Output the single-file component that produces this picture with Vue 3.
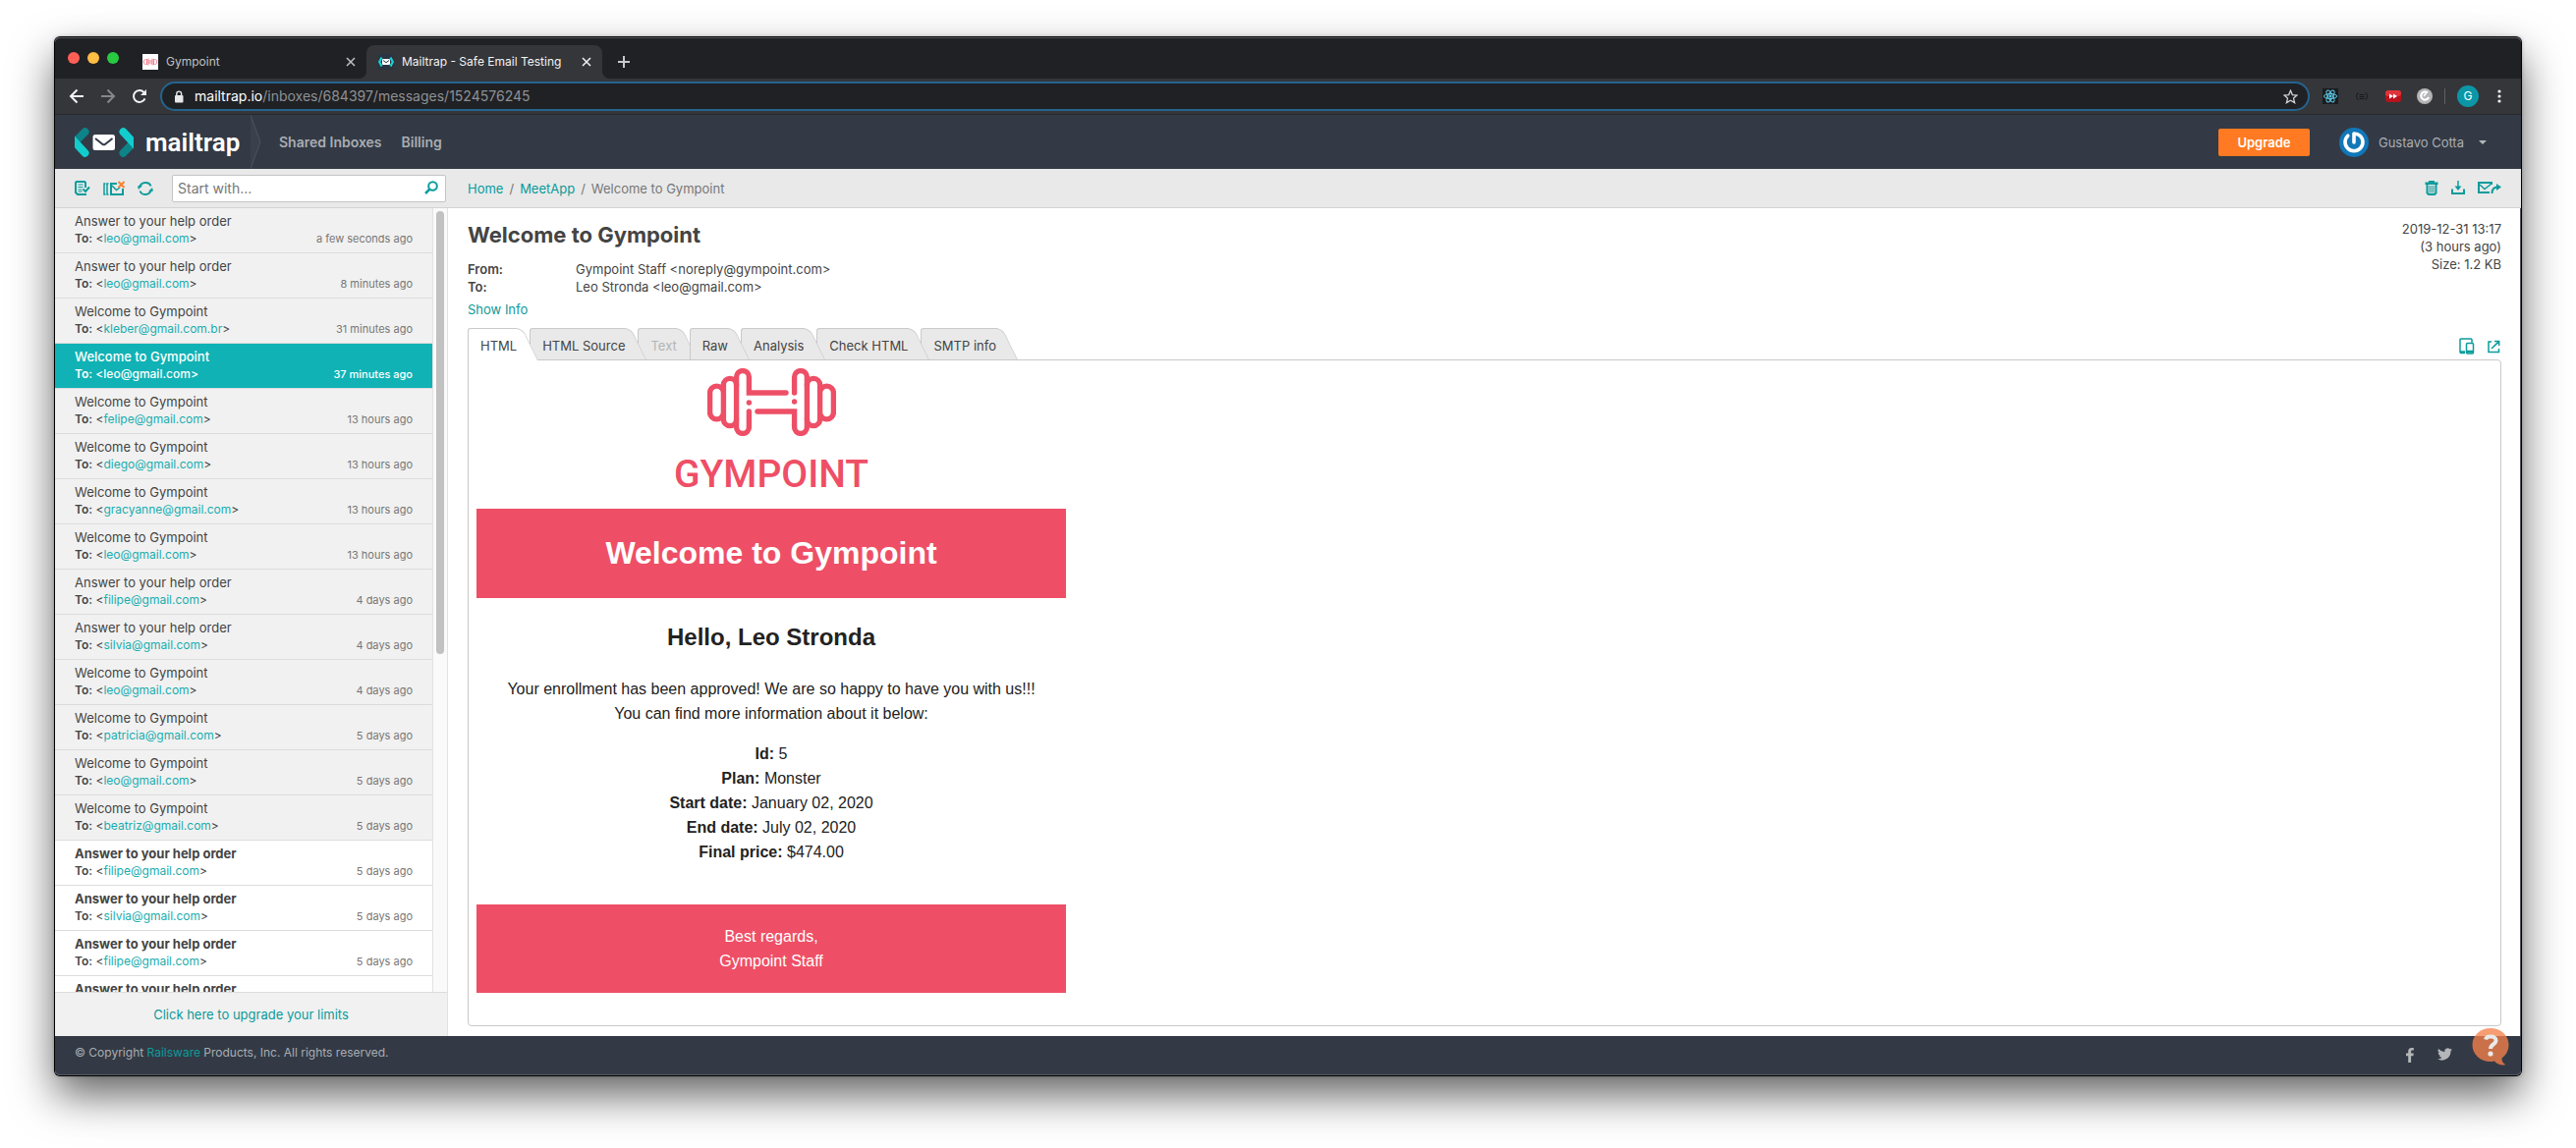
<script setup>
import { ref } from 'vue'

const query = ref('')
const path = ref('/inboxes/684397/messages/1524576245')
const HELP = 'Answer to your help order'
const WELCOME = 'Welcome to Gympoint'

const messages = [
  { title: HELP, to: 'leo@gmail.com', time: 'a few seconds ago' },
  { title: HELP, to: 'leo@gmail.com', time: '8 minutes ago' },
  { title: WELCOME, to: 'kleber@gmail.com.br', time: '31 minutes ago' },
  { title: WELCOME, to: 'leo@gmail.com', time: '37 minutes ago', selected: true },
  { title: WELCOME, to: 'felipe@gmail.com', time: '13 hours ago' },
  { title: WELCOME, to: 'diego@gmail.com', time: '13 hours ago' },
  { title: WELCOME, to: 'gracyanne@gmail.com', time: '13 hours ago' },
  { title: WELCOME, to: 'leo@gmail.com', time: '13 hours ago' },
  { title: HELP, to: 'filipe@gmail.com', time: '4 days ago' },
  { title: HELP, to: 'silvia@gmail.com', time: '4 days ago' },
  { title: WELCOME, to: 'leo@gmail.com', time: '4 days ago' },
  { title: WELCOME, to: 'patricia@gmail.com', time: '5 days ago' },
  { title: WELCOME, to: 'leo@gmail.com', time: '5 days ago' },
  { title: WELCOME, to: 'beatriz@gmail.com', time: '5 days ago' },
  { title: HELP, to: 'filipe@gmail.com', time: '5 days ago', unread: true },
  { title: HELP, to: 'silvia@gmail.com', time: '5 days ago', unread: true },
  { title: HELP, to: 'filipe@gmail.com', time: '5 days ago', unread: true },
  { title: HELP, to: 'silvia@gmail.com', time: '5 days ago', unread: true },
]

const views = ['HTML', 'HTML Source', 'Text', 'Raw', 'Analysis', 'Check HTML', 'SMTP info']

const details = [
  ['Id:', '5'],
  ['Plan:', 'Monster'],
  ['Start date:', 'January 02, 2020'],
  ['End date:', 'July 02, 2020'],
  ['Final price:', '$474.00'],
]
</script>

<template>
  <div class="desktop">
    <div class="window">
      <div class="tabstrip">
        <div class="lights"><i class="red"></i><i class="yellow"></i><i class="green"></i></div>
        <div class="btab">
          <svg width="16" height="16" viewBox="0 0 16 16">
            <path fill="#fff" d="M0 0h16v16H0z" />
            <g fill="none" stroke="#f0788a"><path d="M6 7h4M6 9h4M4.500 5v6M6 4.500v7M11.500 5v6M10 4.500v7" /><path d="M3.500 5.500c-3 0-3 5 0 5M12.500 5.500c3 0 3 5 0 5" /></g>
          </svg>
          <span>Gympoint</span>
          <button class="plain" aria-label="Close tab"><svg width="10" height="10" viewBox="0 0 10 10"><path d="M1 1l8 8M9 1l-8 8" stroke="currentColor" stroke-width="1.500" /></svg></button>
        </div>
        <div class="btab current">
          <svg width="16" height="16" viewBox="0 0 16 16">
            <path fill="#2b3440" d="M0 0h16v16H0z" />
            <path d="M3.500 3.500L1.200 8l2.300 4.500M12.500 3.500L14.800 8l-2.300 4.500" fill="none" stroke="#14d5d8" stroke-width="2.200" />
            <rect x="4" y="5" width="8" height="6" rx="1" fill="#fff" /><path d="M5 6.500l3 2.200 3-2.200" fill="none" stroke="#2b3440" />
          </svg>
          <span>Mailtrap - Safe Email Testing</span>
          <button class="plain" aria-label="Close tab"><svg width="10" height="10" viewBox="0 0 10 10"><path d="M1 1l8 8M9 1l-8 8" stroke="currentColor" stroke-width="1.500" /></svg></button>
        </div>
        <button class="plain newtab" aria-label="New tab"><svg width="12" height="12" viewBox="0 0 12 12"><path d="M6 0v12M0 6h12" stroke="currentColor" stroke-width="2" /></svg></button>
      </div>

      <div class="browserbar">
        <button class="plain" aria-label="Back"><svg width="16" height="16" viewBox="0 0 16 16" fill="none" stroke="#f1f1f2" stroke-width="2"><path d="M15 8H2M8.500 1.500L2 8l6.500 6.500" /></svg></button>
        <button class="plain" aria-label="Forward"><svg width="16" height="16" viewBox="0 0 16 16" fill="none" stroke="#86878a" stroke-width="2"><path d="M1 8h13M7.500 1.500L14 8l-6.500 6.500" /></svg></button>
        <button class="plain" aria-label="Reload"><svg width="16" height="16" viewBox="0 0 16 16"><path d="M13.500 10.300A6 6 0 1 1 12.500 4" fill="none" stroke="#f1f1f2" stroke-width="2" /><path d="M15 1v6H9z" fill="#f1f1f2" /></svg></button>
        <label class="address">
          <svg width="10" height="13" viewBox="0 0 10 13"><rect x="1" y="5" width="8.500" height="7.500" rx="1" fill="#e8e8ea" /><path d="M2.800 5.500V3.500a2.400 2.400 0 0 1 4.800 0v2" fill="none" stroke="#e8e8ea" stroke-width="1.400" /></svg>
          <span class="host">mailtrap.io</span>
          <input v-model="path" type="text" aria-label="Address" />
          <svg width="15" height="15" viewBox="0 0 16 16"><path d="M8 1.300l2 4.700 5 .400-3.800 3.300 1.200 4.900L8 12l-4.400 2.600 1.200-4.900L1 6.400 6 6z" fill="none" stroke="#d0d1d4" stroke-width="1.400" /></svg>
        </label>
        <div class="extensions">
          <svg width="16" height="16" viewBox="0 0 16 16"><path fill="#1b1c1f" d="M0 0h16v16H0z" /><g fill="none" stroke="#5ccbe8"><ellipse cx="8" cy="8" rx="6.600" ry="2.500" /><ellipse cx="8" cy="8" rx="6.600" ry="2.500" transform="rotate(60 8 8)" /><ellipse cx="8" cy="8" rx="6.600" ry="2.500" transform="rotate(120 8 8)" /></g><circle cx="8" cy="8" r="1.400" fill="#5ccbe8" /></svg>
          <svg width="16" height="16" viewBox="0 0 16 16" fill="none" stroke="#17181a"><path d="M4.500 4.500c-2 0-1 3-2.500 3.500 1.500.500.500 3.500 2.500 3.500M11.500 4.500c2 0 1 3 2.500 3.500-1.500.500-.500 3.500-2.500 3.500M5.500 6.500h5M5.500 8.500h5M5.500 10.500h5" /></svg>
          <svg width="16" height="16" viewBox="0 0 16 16"><rect y="2" width="16" height="12" rx="3" fill="#b8121c" /><rect y="2" width="16" height="6" rx="3" fill="#e0343c" /><path fill="#fff" d="M4 5.500L8 8l-4 2.500zM8 5.500L12 8l-4 2.500z" /></svg>
          <svg width="16" height="16" viewBox="0 0 16 16"><circle cx="8" cy="8" r="8" fill="#b4b4b6" /><path d="M10.500 4.200A4 4 0 1 0 12 9" fill="none" stroke="#fff" stroke-width="2.200" /><path d="M7 8l4-5" stroke="#fff" stroke-width="1.500" /></svg>
          <i class="divider"></i>
          <span class="profile">G</span>
          <svg class="dots" width="4" height="16" viewBox="0 0 4 16" fill="#f1f1f2"><circle cx="2" cy="3" r="1.600" /><circle cx="2" cy="8" r="1.600" /><circle cx="2" cy="13" r="1.600" /></svg>
        </div>
      </div>

      <header class="nav">
        <a class="brand" href="#">
          <svg width="60" height="30" viewBox="0 0 60 30">
            <g fill="none" stroke-width="8" stroke-linecap="round">
              <path d="M0 15L10.500 4.200M49.500 25.800L60 15" stroke="#0c8488" />
              <path d="M-4 10L10.500 25.800M49.500 4.200L64 20" stroke="#11cdce" />
            </g>
            <rect x="18.500" y="7" width="22.500" height="16" rx="2.500" fill="#fff" />
            <path d="M21 11l7.200 5.700c1 .800 2 .800 3 0L38.500 11" fill="none" stroke="#333a45" stroke-width="2" />
          </svg>
          <span>mailtrap</span>
        </a>
        <svg class="notch" width="11" height="55" viewBox="0 0 11 55"><path d="M0 0l10 27.500L0 55" fill="#39414c" stroke="#4b535e" /></svg>
        <nav><a href="#">Shared Inboxes</a><a href="#">Billing</a></nav>
        <button class="upgrade">Upgrade</button>
        <button class="account">
          <svg width="30" height="30" viewBox="0 0 30 30"><circle cx="15" cy="15" r="15" fill="#1177b8" /><path d="M8.800 8.200a9 9 0 1 0 12.400 0C19.500 6.600 17.800 6 15 6v9" fill="none" stroke="#fff" stroke-width="3.600" stroke-linecap="round" stroke-linejoin="round" /></svg>
          <span>Gustavo Cotta</span>
          <svg width="8" height="4" viewBox="0 0 8 4"><path fill="#b5b8bc" d="M0 0h8L4 4z" /></svg>
        </button>
      </header>

      <div class="actions">
        <div class="inboxtools">
          <button class="plain" aria-label="Mark all as read"><svg width="16" height="16" viewBox="0 0 16 16" fill="none" stroke="#0c9c9c" stroke-width="2"><path d="M11 13v1H3L1 12V2l1-1h8l1 1v5" /><path d="M3.500 4h5M3.500 6.500h5M3.500 9h4M3.500 11h4" stroke-width="1" /><path d="M8.500 8.500L11 11l4-4.500" /></svg></button>
          <button class="plain" aria-label="Empty inbox"><svg width="22" height="16" viewBox="0 0 22 16" fill="none" stroke="#0c9c9c"><path d="M2.500 3H1v11h1.500M5.500 3H4v11h1.500" stroke-width="1.500" /><path d="M14 3H8v11h12V8" stroke-width="2" /><path d="M9 5l4.500 4.500L17 7" stroke-width="1.500" /><path d="M15.500 1l6 6M21.500 1l-6 6" stroke="#f58233" stroke-width="2" /></svg></button>
          <button class="plain" aria-label="Refresh"><svg width="16" height="16" viewBox="0 0 16 16"><path d="M2 6.500C4 1 11.500.500 13.500 5.500M14 9.500C12 15 4.500 15.500 2.500 10.500" fill="none" stroke="#0c9c9c" stroke-width="2" /><path d="M0 5.500L5 5 1 9zM16 10.500L11 11l4-4z" fill="#0c9c9c" /></svg></button>
          <label class="search">
            <input v-model="query" type="text" placeholder="Start with..." aria-label="Search messages" />
            <svg width="14" height="14" viewBox="0 0 14 14" fill="none" stroke="#0c9c9c" stroke-width="2"><circle cx="8.500" cy="5.500" r="4.300" /><path d="M5.500 8.500L1 13" stroke-width="2.500" /></svg>
          </label>
        </div>
        <div class="crumbs">
          <a href="#">Home</a><span>/</span><a href="#">MeetApp</a><span>/</span><span>Welcome to Gympoint</span>
        </div>
        <div class="messagetools">
          <button class="plain" aria-label="Delete"><svg width="14" height="15" viewBox="0 0 14 15"><path fill="#0c9c9c" d="M4 0h6v1.500h3.500V4h-13V1.500H4z" /><path d="M2.500 4v8.500L4 14h6l1.500-1.500V4" fill="none" stroke="#0c9c9c" stroke-width="2" /><path d="M5 5v7.500M7 5v7.500M9 5v7.500" stroke="#0c9c9c" /></svg></button>
          <button class="plain" aria-label="Download"><svg width="14" height="15" viewBox="0 0 14 15" fill="none" stroke="#0c9c9c" stroke-width="2"><path d="M1 8.500V13h12V8.500" /><path d="M7 0v6" stroke-width="1.500" /><path d="M3.500 5.500h7L7 10z" fill="#0c9c9c" stroke="none" /></svg></button>
          <button class="plain" aria-label="Forward message"><svg width="24" height="15" viewBox="0 0 24 15" fill="none" stroke="#0c9c9c" stroke-width="2"><path d="M12 12H1V2h13v2" /><path d="M2 4l5 4.500L14 3" stroke-width="1.500" /><path d="M14.500 13c0-5 2-6.500 6-6.500" /><path d="M19 3l5 3.500-5 3.500z" fill="#0c9c9c" stroke="none" /></svg></button>
        </div>
      </div>

      <div class="body">
        <aside class="sidebar">
          <div class="listwrap">
            <ul class="list">
              <li v-for="(m, i) in messages" :key="i" :class="{ selected: m.selected, unread: m.unread }">
                <div class="subject">{{ m.title }}</div>
                <div class="meta">
                  <span><b>To:</b> &lt;<a href="#">{{ m.to }}</a>&gt;</span>
                  <time>{{ m.time }}</time>
                </div>
              </li>
            </ul>
            <div class="scroll"><div class="thumb"></div></div>
          </div>
          <a class="limits" href="#">Click here to upgrade your limits</a>
        </aside>

        <main class="message">
          <div class="head">
            <div>
              <h1>Welcome to Gympoint</h1>
              <dl>
                <dt>From:</dt><dd>Gympoint Staff &lt;noreply@gympoint.com&gt;</dd>
                <dt>To:</dt><dd>Leo Stronda &lt;leo@gmail.com&gt;</dd>
              </dl>
              <a href="#">Show Info</a>
            </div>
            <div class="stamp">2019-12-31 13:17<br />(3 hours ago)<br />Size: 1.2 KB</div>
          </div>

          <div class="viewbar">
            <button
              v-for="(v, i) in views"
              :key="v"
              class="view"
              :class="{ active: i === 0 }"
              :disabled="v === 'Text'"
              :style="{ zIndex: v === 'Text' ? 1 : 10 - i }"
            >{{ v }}</button>
            <div class="viewtools">
              <button class="plain" aria-label="Device preview"><svg width="16" height="17" viewBox="0 0 16 17" fill="none" stroke="#0c9c9c" stroke-width="1.500"><path d="M6 15.500H1.800L1 14.700V1.800L1.800 1h10.400l.8.800V5" /><rect x="7.500" y="5.500" width="7" height="10.500" rx="1" /><path d="M1 14.500h5M7.500 14h7" stroke-width="2.500" /></svg></button>
              <button class="plain" aria-label="Open in new window"><svg width="14" height="14" viewBox="0 0 14 14" fill="none" stroke="#0c9c9c" stroke-width="1.500"><path d="M5 2H2v10.500h10.500V9M8 1.500h4.700V6M12.500 1.700L5 9" /></svg></button>
            </div>
          </div>

          <div class="frame">
            <article class="mail">
              <div class="logo">
                <svg width="131" height="69" viewBox="0 0 131 69" fill="none" stroke="#ee4f66" stroke-width="5.400" stroke-linecap="round">
                  <path d="M80 25H42.400V9a6.400 6.400 0 0 0-12.800 0V60a6.400 6.400 0 0 0 12.800 0V44" />
                  <path d="M29.600 17a6.600 6.600 0 0 0-13.200 0V52a6.600 6.600 0 0 0 13.200 0M16.400 25a6.900 6.900 0 0 0-13.800 0V45a6.900 6.900 0 0 0 13.800 0" />
                  <path d="M51 44H88.600V60a6.400 6.400 0 0 0 12.800 0V9a6.400 6.400 0 0 0-12.800 0V25" />
                  <path d="M101.400 17a6.600 6.600 0 0 1 13.200 0V52a6.600 6.600 0 0 1-13.200 0M114.600 25a6.900 6.900 0 0 1 13.800 0V45a6.900 6.900 0 0 1-13.800 0" />
                  <path d="M42.400 35v.1M88.600 34v.1" />
                </svg>
                <span>GYMPOINT</span>
              </div>
              <h2 class="banner">Welcome to Gympoint</h2>
              <h3>Hello, Leo Stronda</h3>
              <p>Your enrollment has been approved! We are so happy to have you with us!!!<br />You can find more information about it below:</p>
              <p><template v-for="(d, i) in details" :key="d[0]"><br v-if="i" /><b>{{ d[0] }}</b> {{ d[1] }}</template></p>
              <div class="regards">Best regards,<br />Gympoint Staff</div>
            </article>
          </div>
        </main>
      </div>

      <footer class="footer">
        <span>© Copyright <a href="#">Railsware</a> Products, Inc. All rights reserved.</span>
        <div class="social">
          <a href="#" aria-label="Facebook"><svg width="8" height="15" viewBox="0 0 8 15"><path fill="#b4b6b9" d="M2.200 15V8.300H0V5.500h2.200V3.600C2.200 1.300 3.500 0 5.700 0H7.800v2.600H6.300c-.9 0-1.200.500-1.200 1.300v1.600h2.600l-.3 2.800H5.100V15z" /></svg></a>
          <a href="#" aria-label="Twitter"><svg width="15" height="13" viewBox="0 0 24 20"><path fill="#b4b6b9" d="M24 2.400a10 10 0 0 1-2.800.8A5 5 0 0 0 23.300.500a10 10 0 0 1-3.100 1.200 4.900 4.900 0 0 0-8.400 4.500A14 14 0 0 1 1.700 1a4.900 4.900 0 0 0 1.500 6.600A5 5 0 0 1 1 7v.1a4.900 4.900 0 0 0 4 4.800 5 5 0 0 1-2.300.1 4.900 4.900 0 0 0 4.600 3.400A10 10 0 0 1 0 17.500 14 14 0 0 0 21.500 5z" /></svg></a>
        </div>
        <button class="plain help" aria-label="Help"><svg width="38" height="39" viewBox="0 0 38 39"><path d="M19 0c10.500 0 18.500 7.500 18.500 17 0 6-3 10.500-7 13.500 0 3 1 5.500 4 6.500-5 1.500-9-.5-11.500-3.500-1.300.4-2.700.5-4 .5C8.500 34 .5 26.500.5 17S8.500 0 19 0z" fill="#f5814b" fill-opacity=".78" /><path d="M14 11.500c1-3.800 10.500-4.300 10.500 1 0 4.300-5.500 3.500-5.500 8.500" fill="none" stroke="#e9e9e9" stroke-width="4" /><circle cx="19" cy="26" r="2.600" fill="#e9e9e9" /></svg></button>
      </footer>
    </div>
  </div>
</template>

<style>
body { margin: 0; background: #fff; }
</style>

<style scoped>
* { box-sizing: border-box; }
.desktop {
  height: 100vh;
  padding: 38px 56px 74px;
  display: flex;
  font: 13px/18px Inter, "Liberation Sans", sans-serif;
  color: #444;
  overflow: hidden;
}
.window {
  flex: 1;
  min-width: 0;
  display: flex;
  flex-direction: column;
  border-radius: 5px;
  background: #fff;
  box-shadow: inset 0 0 0 1px #55585d, 0 0 0 1px #000, 0 0 4px rgba(0, 0, 0, .4), 0 20px 44px rgba(0, 0, 0, .62);
}
a { color: #0c9a9a; text-decoration: none; }
button, input { font: inherit; color: inherit; }
button { cursor: pointer; border: 0; padding: 0; }
svg { display: block; flex: none; }
.plain { background: none; display: flex; align-items: center; }

/* browser chrome */
.tabstrip {
  flex: 0 0 42px;
  display: flex;
  align-items: flex-end;
  background: #202124;
  border-radius: 5px 5px 0 0;
  box-shadow: inset 0 1px #55585d;
  padding-left: 13px;
  font-size: 12px;
  color: #bfc1c4;
}
.lights { display: flex; gap: 8px; width: 64px; height: 42px; align-items: center; }
.lights i { width: 12px; height: 12px; border-radius: 50%; }
.red { background: #ff5f57; }
.yellow { background: #ffbd44; }
.green { background: #28ca42; }
.btab {
  position: relative;
  width: 240px;
  height: 34px;
  padding: 0 11px 0 12px;
  display: flex;
  align-items: center;
  gap: 8px;
}
.btab span { flex: 1; white-space: nowrap; }
.current { background: #35363a; border-radius: 8px 8px 0 0; color: #f1f3f4; }
.current::before, .current::after {
  content: "";
  position: absolute;
  bottom: 0;
  width: 8px;
  height: 8px;
}
.current::before { left: -8px; background: radial-gradient(circle at 0 0, transparent 8px, #35363a 8px); }
.current::after { right: -8px; background: radial-gradient(circle at 100% 0, transparent 8px, #35363a 8px); }
.newtab { height: 34px; margin-left: 16px; color: #c8c9cc; }
.browserbar {
  flex: 0 0 37px;
  display: flex;
  align-items: center;
  gap: 16px;
  padding: 0 20px 0 14px;
  background: #35363a;
  border-bottom: 1px solid #28292c;
}
.address {
  flex: 1;
  height: 30px;
  display: flex;
  align-items: center;
  padding: 0 10px 0 12px;
  margin-left: -3px;
  border: 2px solid #24648f;
  border-radius: 15px;
  background: #202124;
  font-size: 14px;
  color: #8e9195;
}
.host { color: #fff; margin-left: 11px; }
.address input { flex: 1; min-width: 0; padding: 0; border: 0; background: none; outline: 0; }
.extensions { display: flex; align-items: center; gap: 16px; margin-left: -3px; }
.divider { width: 1px; height: 16px; margin: 0 -4px; background: #5f6064; }
.profile {
  width: 22px;
  line-height: 22px;
  border-radius: 50%;
  background: #0c97a7;
  color: #fff;
  font-size: 12px;
  text-align: center;
}
.dots { margin-left: 3px; }

/* site navigation */
.nav {
  flex: 0 0 55px;
  display: flex;
  align-items: center;
  background: #333a45;
  color: #a9adb3;
  padding-right: 35px;
}
.brand {
  width: 199px;
  height: 55px;
  padding-left: 20px;
  display: flex;
  align-items: center;
  gap: 12px;
  color: #fff;
  font: 600 26px/36px Roboto, "Liberation Sans", sans-serif;
}
.nav nav { flex: 1; display: flex; gap: 20px; margin-left: 18px; font-size: 14px; }
.nav nav a { color: #a9adb3; font-weight: 600; }
.upgrade {
  width: 93px;
  height: 28px;
  border-radius: 2px;
  background: #ff7a22;
  color: #fff;
  font-weight: 600;
}
.account { display: flex; align-items: center; gap: 10px; margin-left: 30px; background: none; }
.account svg:last-child { margin-left: 5px; }

/* toolbar */
.actions {
  flex: 0 0 40px;
  display: flex;
  align-items: center;
  background: #e9e9e9;
  border-bottom: 1px solid #d3d3d3;
  padding-right: 20px;
}
.inboxtools { width: 400px; display: flex; align-items: center; gap: 13px; padding: 0 2px 0 20px; }
.search { position: relative; flex: 1; margin-left: 6px; }
.search input {
  display: block;
  width: 100%;
  height: 28px;
  padding: 0 32px 0 5px;
  border: 1px solid #c4c4c4;
  border-radius: 2px;
  background: #fff;
  font-size: 14px;
  outline: 0;
}
.search input::placeholder { color: #777; opacity: 1; }
.search svg { position: absolute; right: 8px; top: 6px; }
.crumbs { flex: 1; display: flex; gap: 6px; padding-left: 20px; color: #777; }
.messagetools { display: flex; gap: 13px; }

/* message list */
.body { flex: 1; min-height: 0; display: flex; }
.sidebar {
  flex: 0 0 400px;
  display: flex;
  flex-direction: column;
  background: #f1f1f1;
  border-right: 1px solid #e2e2e2;
}
.listwrap { flex: 1; min-height: 0; display: flex; overflow: hidden; }
.list { flex: 1; margin: 0; padding: 0; list-style: none; }
.list li { height: 46px; padding: 4px 20px; border-bottom: 1px solid #dcdcdc; }
.meta { display: flex; justify-content: space-between; font-size: 12px; }
.meta b { font-weight: 600; }
.meta a { color: #18adb0; }
time { font-size: 11px; color: #777; }
.unread { background: #fff; }
.unread .subject { font-weight: 700; }
.list .selected { background: #10b2b5; color: #fff; font-weight: 500; }
.selected a, .selected time { color: #fff; }
.scroll { width: 15px; padding: 3px; background: #fafafa; border-left: 1px solid #e2e2e2; }
.thumb { width: 8px; height: 57%; border-radius: 4px; background: #c1c1c1; }
.limits { flex: 0 0 45px; line-height: 44px; text-align: center; border-top: 1px solid #dcdcdc; }

/* message */
.message { flex: 1; min-width: 0; display: flex; flex-direction: column; padding: 12px 20px 10px; }
.head { display: flex; justify-content: space-between; padding-bottom: 10px; }
h1 { margin: 0 0 11px; font-size: 22px; line-height: 30px; font-weight: 700; }
dl { margin: 0 0 5px; display: grid; grid-template-columns: 110px 1fr; }
dt { font-weight: 600; }
dd { margin: 0; }
.stamp { text-align: right; }
.viewbar { display: flex; align-items: stretch; height: 33px; margin-bottom: -1px; position: relative; }
.view {
  position: relative;
  padding: 2px 13px 0;
  background: none;
  isolation: isolate;
}
.view::before, .view::after {
  content: "";
  position: absolute;
  z-index: -1;
  top: 0;
  bottom: 1px;
  background: #e9e9e9;
  border: 0 solid #c9c9c9;
}
.view::before { left: 0; right: 16px; border-width: 1px 0 0 1px; border-radius: 3px 0 0 0; }
.view::after {
  left: 18px;
  right: -9px;
  border-width: 1px 1px 0 0;
  border-radius: 0 7px 0 0;
  transform: skewX(26deg);
  transform-origin: bottom;
}
.active::before, .active::after { bottom: 0; background: #fff; }
.view:disabled { color: #b5b5b5; cursor: default; }
.viewtools { margin-left: auto; display: flex; gap: 12px; padding: 4px 1px 0 0; align-items: center; }
.frame { flex: 1; min-height: 0; padding: 8px; border: 1px solid #c9c9c9; border-radius: 0 4px 4px 4px; overflow: hidden; }

/* rendered mail */
.mail { width: 600px; font: 16px/25px "Liberation Sans", Arial, sans-serif; color: #222; text-align: center; }
.logo { height: 143px; display: flex; flex-direction: column; align-items: center; }
.logo span { margin-top: 19px; font: 500 39px/40px Roboto, sans-serif; color: #ee4f66; }
.banner { margin: 0; height: 91px; font-size: 32px; line-height: 91px; background: #ee4f66; color: #fff; }
h3 { margin: 25px 0; font-size: 24px; line-height: 30px; }
.mail p { margin: 0 0 16px; }
.regards { margin-top: 41px; padding: 20px; background: #ee4f66; color: #fff; }

/* footer */
.footer {
  position: relative;
  flex: 0 0 40px;
  display: flex;
  justify-content: space-between;
  padding: 8px 70px 0 20px;
  border-radius: 0 0 5px 5px;
  background: #333a45;
  box-shadow: inset 0 -1px #555b64;
  font-size: 12px;
  color: #a9adb3;
}
.social { display: flex; gap: 24px; padding-top: 4px; }
.help { position: absolute; right: 12px; top: -8px; }
</style>
